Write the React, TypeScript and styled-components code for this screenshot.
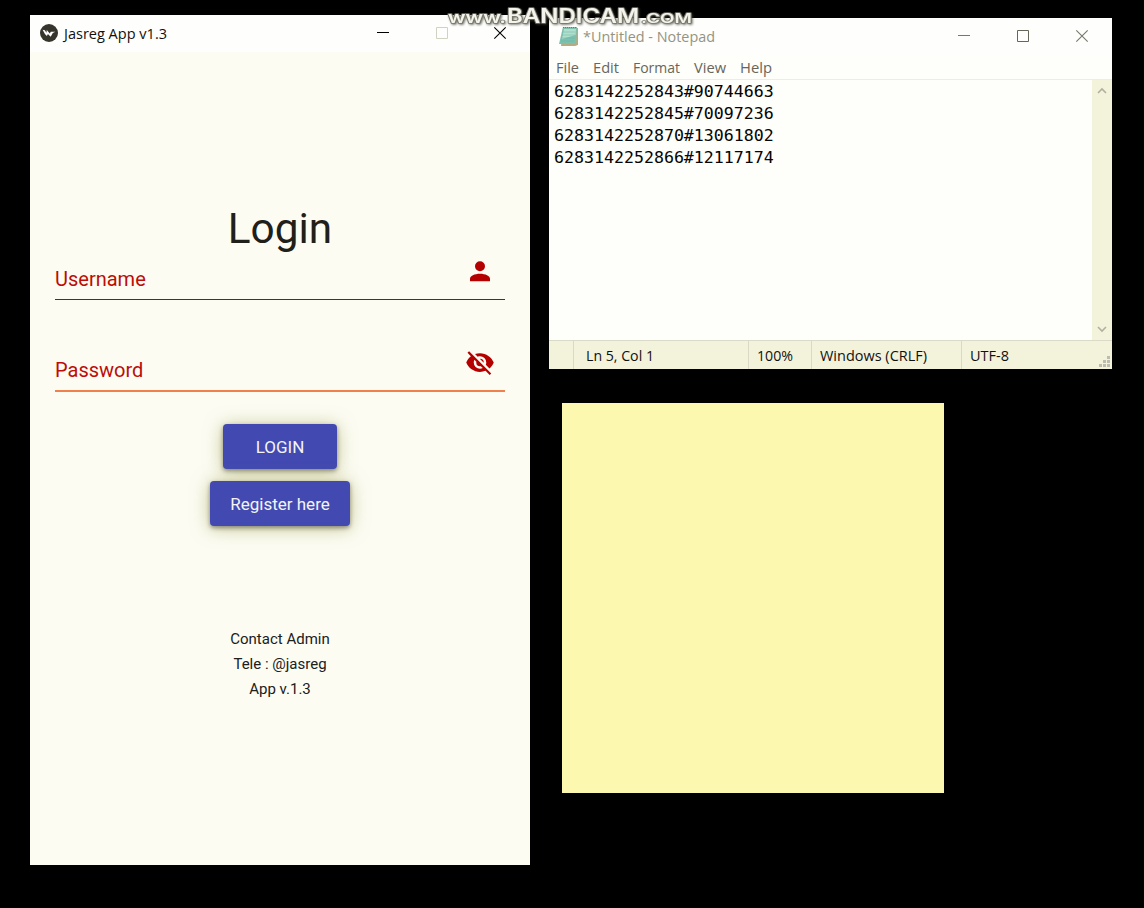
import React from 'react';
import styled, { createGlobalStyle } from 'styled-components';

const Global = createGlobalStyle`
  * { box-sizing: border-box; }
  body { margin: 0; background: #000; font-family: "Open Sans", "Noto Sans", sans-serif; overflow: hidden; }
`;

const Desktop = styled.main`
  position: relative;
  width: 1144px;
  height: 908px;
  background: #000;
  overflow: hidden;
`;

const Win = styled.section<{ $x: number; $y: number; $w: number; $h: number; $bg: string }>`
  position: absolute;
  left: ${(p) => p.$x}px;
  top: ${(p) => p.$y}px;
  width: ${(p) => p.$w}px;
  height: ${(p) => p.$h}px;
  background: ${(p) => p.$bg};
  display: flex;
  flex-direction: column;
`;

const TitleBar = styled.header<{ $h: number; $pad: number }>`
  height: ${(p) => p.$h}px;
  flex: none;
  display: flex;
  align-items: center;
  padding-left: ${(p) => p.$pad}px;
  background: #fefefc;
`;

const Fit = styled.svg`
  display: block;
  flex: none;
  overflow: visible;
`;

const Controls = styled.div<{ $gap: number; $right: number }>`
  margin-left: auto;
  margin-right: ${(p) => p.$right}px;
  padding-bottom: 1px;
  display: flex;
  gap: ${(p) => p.$gap}px;
`;

const LoginBody = styled.div`
  flex: 1;
  background: #fcfcf3;
  padding: 149px 25px 0;
  display: flex;
  flex-direction: column;
  align-items: center;
  font-family: Roboto, sans-serif;
`;

const Heading = styled.h1`
  margin: 0;
  height: 56px;
  font-size: 42.3px;
  line-height: 56px;
  font-weight: 400;
  color: #20201a;
`;

const Field = styled.label<{ $gap: number; $line: string; $thick: number }>`
  width: 450px;
  height: 43px;
  margin-top: ${(p) => p.$gap}px;
  display: flex;
  justify-content: space-between;
  padding-right: 11px;
  border-bottom: ${(p) => p.$thick}px solid ${(p) => p.$line};
  color: #bc0d06;
`;

const FieldName = styled.span<{ $top: number }>`
  padding-top: ${(p) => p.$top}px;
  font-size: 20px;
  line-height: 24px;
`;

const Button = styled.button<{ $w: number; $gap: number }>`
  width: ${(p) => p.$w}px;
  height: 45px;
  flex: none;
  margin-top: ${(p) => p.$gap}px;
  padding: 1px 0 1px;
  border: 0;
  border-radius: 4px;
  background: #424ab2;
  color: #f4f4f4;
  font: 17px/24px Roboto, sans-serif;
  box-shadow: 0 2px 4px rgba(70, 70, 60, 0.55), 0 2px 18px rgba(140, 140, 40, 0.5);
`;

const Contact = styled.p`
  margin: 101px 0 0;
  font-size: 15px;
  line-height: 25px;
  text-align: center;
  color: #20201a;
`;

const Menu = styled.nav`
  height: 25px;
  flex: none;
  display: flex;
  padding: 3px 0 0 7px;
  border-bottom: 1px solid #efefd2;
`;

const Editor = styled.div`
  flex: 1;
  display: flex;
  justify-content: space-between;
`;

const Lines = styled.pre`
  margin: 0;
  padding: 1px 0 0 5px;
  font: 16.6px/22px "DejaVu Sans Mono", monospace;
  color: #050505;
`;

const ScrollBar = styled.div`
  width: 20px;
  background: #f3f3dc;
  display: flex;
  flex-direction: column;
  align-items: center;
  justify-content: space-between;
  padding: 7px 0 7px;
`;

const Status = styled.footer`
  height: 29px;
  flex: none;
  display: flex;
  border-top: 1px solid #dadac8;
  background: #f3f3dc;
`;

const Cell = styled.div<{ $w: number; $pad: number }>`
  width: ${(p) => p.$w}px;
  height: 28px;
  flex: none;
  padding: 5px 0 0 ${(p) => p.$pad}px;
  border-right: 1px solid #d9d9c6;
`;

const LastCell = styled.div`
  flex: 1;
  display: flex;
  justify-content: space-between;
  padding: 5px 2px 2px 8px;
`;

const Watermark = styled.div`
  position: absolute;
  left: 446px;
  top: 5px;
  filter: drop-shadow(1px 1px 1px rgba(60, 60, 50, 0.7));
`;

/* One line of text stretched to an exact width. */
function Label({ children, w, size = 15, color = '#111' }: {
  children: string; w: number; size?: number; color?: string;
}) {
  return (
    <Fit width={w} height={20}>
      <text x="0" y="15" fontSize={size} fill={color} textLength={w} lengthAdjust="spacingAndGlyphs">
        {children}
      </text>
    </Fit>
  );
}

const MenuItem = styled.div<{ $gap: number }>`
  margin-right: ${(p) => p.$gap}px;
`;

const Minimise = ({ color }: { color: string }) => (
  <Fit width="12" height="12"><path d="M0 5.5h12" stroke={color} fill="none" /></Fit>
);
const Maximise = ({ color }: { color: string }) => (
  <Fit width="12" height="12"><path d="M.5 .5h11v11H.5z" stroke={color} fill="none" /></Fit>
);
const Close = ({ color }: { color: string }) => (
  <Fit width="12" height="12"><path d="M.3 .3l11.4 11.4M11.7 .3L.3 11.7" stroke={color} strokeWidth="1.1" fill="none" /></Fit>
);

const AppLogo = styled(Fit)`
  margin: 0 6px 1px 0;
`;

const NoteLogo = styled(Fit)`
  margin: 0 5px 1px 0;
`;

const FieldIcon = styled(Fit)`
  margin-right: -1px;
`;

const Grip = styled(Fit)`
  align-self: flex-end;
`;

const menu: [string, number, number][] = [
  ['File', 23, 14], ['Edit', 26, 14], ['Format', 47, 14], ['View', 32, 14], ['Help', 32, 0],
];

const numbers = [
  '6283142252843#90744663',
  '6283142252845#70097236',
  '6283142252870#13061802',
  '6283142252866#12117174',
];

export default function App() {
  return (
    <Desktop>
      <Global />
      <Win $x={30} $y={15} $w={500} $h={850} $bg="#fcfcf3">
        <TitleBar $h={37} $pad={10}>
          <AppLogo width="18" height="18" viewBox="0 0 18 18">
            <circle cx="9" cy="9" r="9" fill="#35352c" />
            <path d="M2.6 5.8l2.3.5 1.5 2.4.4-2.6 3 3.4 1-1.8h4.6L12.8 9l-2.1 3.7-2.8-2.6-1 1.8-2-1.8z" fill="#fff" />
          </AppLogo>
          <Label w={103}>Jasreg App v1.3</Label>
          <Controls $gap={46.5} $right={24}>
            <Minimise color="#000" />
            <Maximise color="#d2d2c2" />
            <Close color="#000" />
          </Controls>
        </TitleBar>
        <LoginBody>
          <Heading>Login</Heading>
          <Field $gap={0} $line="#861a08" $thick={1}>
            <FieldName $top={10}>Username</FieldName>
            <FieldIcon width="30" height="30" viewBox="0 .6 24 24">
              <path fill="#b50000" d="M12 4a4 4 0 1 1 0 8 4 4 0 0 1 0-8m0 10c4.42 0 8 1.79 8 4v2H4v-2c0-2.21 3.58-4 8-4z" />
            </FieldIcon>
          </Field>
          <Field $gap={49} $line="#f0804e" $thick={2}>
            <FieldName $top={9}>Password</FieldName>
            <FieldIcon width="30" height="30" viewBox="0 1.2 24 24">
              <path fill="#b50000" d="M11.83 9L15 12.16V12a3 3 0 0 0-3-3h-.17m-4.3.8l1.55 1.55c-.05.21-.08.42-.08.65a3 3 0 0 0 3 3c.22 0 .44-.03.65-.08l1.55 1.55c-.67.33-1.41.53-2.2.53a5 5 0 0 1-5-5c0-.79.2-1.53.53-2.2M2 4.27l2.28 2.28.45.45C3.08 8.3 1.78 10 1 12c1.73 4.39 6 7.5 11 7.5 1.55 0 3.03-.3 4.38-.84l.43.42L19.73 22 21 20.73 3.27 3M12 7a5 5 0 0 1 5 5c0 .64-.13 1.26-.36 1.82l2.93 2.93c1.5-1.25 2.7-2.89 3.43-4.75-1.73-4.39-6-7.5-11-7.5-1.4 0-2.74.25-4 .7l2.17 2.15C10.74 7.13 11.35 7 12 7z" />
            </FieldIcon>
          </Field>
          <Button $w={114} $gap={32}>LOGIN</Button>
          <Button $w={140} $gap={12}>Register here</Button>
          <Contact>Contact Admin<br />Tele : @jasreg<br />App v.1.3</Contact>
        </LoginBody>
      </Win>

      <Win $x={549} $y={18} $w={563} $h={351} $bg="#fefefa">
        <TitleBar $h={37} $pad={10}>
          <NoteLogo width="19" height="20" viewBox="0 0 19 20">
            <path d="M4 2h15v17l-3 1H2z" fill="#b5ab82" />
            <path d="M4 1h14l-1 17H0z" fill="#7cc0ae" />
            <path d="M5 3h12l-.5 6L3 13z" fill="#b0dfce" />
            <path d="M4 1.5h14" stroke="#5c8078" strokeDasharray="1 1" />
            <path d="M3.5 6h13M3 9h13M2.5 12h13M2 15h13" stroke="#6fb0a2" strokeWidth=".5" />
          </NoteLogo>
          <Label w={132} color="#949482">*Untitled - Notepad</Label>
          <Controls $gap={47} $right={24}>
            <Minimise color="#77776a" />
            <Maximise color="#66665a" />
            <Close color="#77776a" />
          </Controls>
        </TitleBar>
        <Menu>
          {menu.map(([name, w, gap]) => (
            <MenuItem key={name} $gap={gap}><Label w={w} color="#66665a">{name}</Label></MenuItem>
          ))}
        </Menu>
        <Editor>
          <Lines>{numbers.join('\n')}</Lines>
          <ScrollBar>
            <Fit width="10" height="7"><path d="M1 6l4-4 4 4" stroke="#b0b0a0" strokeWidth="1.6" fill="none" /></Fit>
            <Fit width="10" height="7"><path d="M1 1l4 4 4-4" stroke="#b0b0a0" strokeWidth="1.6" fill="none" /></Fit>
          </ScrollBar>
        </Editor>
        <Status>
          <Cell $w={25} $pad={0} />
          <Cell $w={175} $pad={12}><Label w={68}>Ln 5, Col 1</Label></Cell>
          <Cell $w={63} $pad={8}><Label w={36}>100%</Label></Cell>
          <Cell $w={150} $pad={8}><Label w={107}>Windows (CRLF)</Label></Cell>
          <LastCell>
            <Label w={39}>UTF-8</Label>
            <Grip width="11" height="11">
              <path d="M8 0h3v3H8zM4 4h3v3H4zM8 4h3v3H8zM0 8h3v3H0zM4 8h3v3H4zM8 8h3v3H8z" fill="#bcbcb0" />
            </Grip>
          </LastCell>
        </Status>
      </Win>

      <Win $x={562} $y={403} $w={382} $h={390} $bg="#fdf8b0" />

      <Watermark>
        <Fit width="248" height="24">
          <g fontWeight="600" fill="#f4f4ec" stroke="#77776a" strokeWidth="1.6" paintOrder="stroke" strokeLinejoin="round" style={{ fontFamily: 'Inter, sans-serif' }}>
            <text x="2" y="18" fontSize="16" textLength="58" lengthAdjust="spacingAndGlyphs">www.</text>
            <text x="61" y="18" fontSize="19.5" textLength="132" lengthAdjust="spacingAndGlyphs">BANDICAM</text>
            <text x="195" y="18" fontSize="13" textLength="51" lengthAdjust="spacingAndGlyphs">.COM</text>
          </g>
        </Fit>
      </Watermark>
    </Desktop>
  );
}
